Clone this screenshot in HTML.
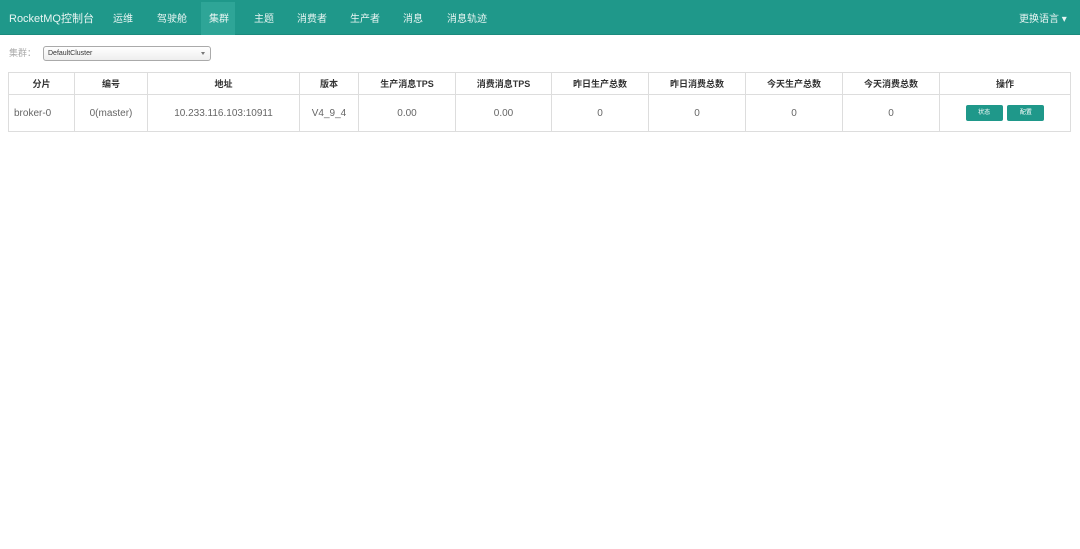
<!DOCTYPE html>
<html><head><meta charset="utf-8"><style>
*{box-sizing:border-box;margin:0;padding:0}
body{width:1080px;height:549px;background:#fff;font-family:"Liberation Sans","Noto Sans CJK SC",sans-serif;font-size:10px;color:#555;position:relative;overflow:hidden}
.nav{position:absolute;left:0;top:0;width:1080px;height:35px;background:#1f988a;border-bottom:1px solid #1b8a7d}
.nav span{position:absolute;top:10px;color:#e8f5f3;font-size:10px}
.brand{left:9px;font-size:11px!important;top:10px!important}
.active{position:absolute;left:201px;top:2px;width:34px;height:33px;background:#2ea597}
.lbl{position:absolute;left:9px;top:46px;color:#aaa;font-size:9px}
.sel{position:absolute;left:43px;top:46px;width:168px;height:15px;border:1px solid #aaa;border-radius:3px;background:linear-gradient(#fff,#eee);font-size:7px;color:#333;padding:3px 0 0 4px}
.sel:after{content:"";position:absolute;right:5px;top:5px;border:2.5px solid transparent;border-top:3px solid #777}
table{position:absolute;left:8px;top:72px;width:1063px;border-collapse:collapse}
td,th{border:1px solid #ddd;text-align:center;font-size:9px}
th{height:22px;color:#333;font-weight:bold}
td{height:37px;color:#666;font-size:10px}
.b{display:inline-block;width:37px;height:16px;background:#1f988a;color:#fff;font-size:6px;line-height:17px;border-radius:2px;margin:0 1px;vertical-align:middle}
</style></head><body>
<div class="nav"><div class="active"></div>
<span class="brand">RocketMQ控制台</span>
<span style="left:113px">运维</span><span style="left:157px">驾驶舱</span><span style="left:209px">集群</span><span style="left:254px">主题</span><span style="left:297px">消费者</span><span style="left:350px">生产者</span><span style="left:403px">消息</span><span style="left:447px">消息轨迹</span>
<span style="left:1019px">更换语言 ▾</span></div>
<div class="lbl">集群：</div>
<div class="sel">DefaultCluster</div>
<table><tr>
<th style="width:66px">分片</th><th style="width:73px">编号</th><th style="width:152px">地址</th><th style="width:59px">版本</th><th style="width:97px">生产消息TPS</th><th style="width:96px">消费消息TPS</th><th style="width:97px">昨日生产总数</th><th style="width:97px">昨日消费总数</th><th style="width:97px">今天生产总数</th><th style="width:97px">今天消费总数</th><th>操作</th></tr>
<tr><td style="text-align:left;padding-left:5px">broker-0</td><td>0(master)</td><td>10.233.116.103:10911</td><td>V4_9_4</td><td>0.00</td><td>0.00</td><td>0</td><td>0</td><td>0</td><td>0</td><td><span class="b">状态</span> <span class="b">配置</span></td></tr>
</table>
</body></html>
